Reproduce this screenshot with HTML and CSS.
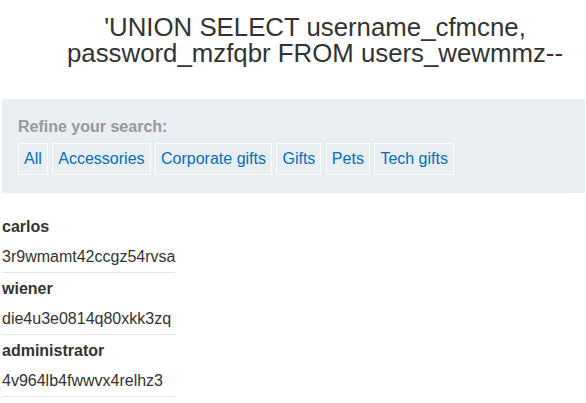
FILE: index.html
```html
<!DOCTYPE html>
<html>
<head>
<meta charset="utf-8">
<link rel="stylesheet" href="styles.css">
</head>
<body>
<div class="page">
  <h1 class="title">'UNION SELECT username_cfmcne, password_mzfqbr FROM users_wewmmz--</h1>
  <section class="filters">
    <div class="filters-label">Refine your search:</div>
    <div class="filter-list">
      <a class="filter" href="#">All</a>
      <a class="filter" href="#">Accessories</a>
      <a class="filter" href="#">Corporate gifts</a>
      <a class="filter" href="#">Gifts</a>
      <a class="filter" href="#">Pets</a>
      <a class="filter" href="#">Tech gifts</a>
    </div>
  </section>
  <table class="results">
    <tbody>
      <tr><th>carlos</th></tr>
      <tr><td>3r9wmamt42ccgz54rvsa</td></tr>
      <tr><th>wiener</th></tr>
      <tr><td>die4u3e0814q80xkk3zq</td></tr>
      <tr><th>administrator</th></tr>
      <tr><td>4v964lb4fwwvx4relhz3</td></tr>
    </tbody>
  </table>
</div>
</body>
</html>
```
FILE: styles.css
```css
html, body {
  margin: 0;
  padding: 0;
  background: #fff;
}
body {
  font-family: "Liberation Sans", Arial, sans-serif;
  color: #333;
  font-size: 16px;
}
.page {
  padding: 0 0 0 2px;
}
.title {
  margin: 14px 0 33px;
  padding-left: 42px;
  font-size: 25.8px;
  line-height: 26px;
  font-weight: normal;
  text-align: center;
  color: #333;
}
.filters {
  background: #e8eef1;
  margin-right: 1px;
  padding: 18px 16px 18px 16px;
}
.filters-label {
  font-weight: bold;
  color: #999;
  line-height: 20px;
  margin-bottom: 6px;
}
.filter-list {
  display: flex;
  gap: 4.5px;
}
.filter {
  display: block;
  border: 1px solid #fff;
  padding: 5px 5px;
  line-height: 20px;
  color: #0071bc;
  text-decoration: none;
}
.results {
  margin-top: 18px;
  border-collapse: collapse;
}
.results th {
  text-align: left;
  font-weight: bold;
  padding: 6px 0 5px;
  line-height: 20px;
}
.results td {
  padding: 5px 0;
  line-height: 20px;
  border-bottom: 1px solid #e6e6e6;
}
```
